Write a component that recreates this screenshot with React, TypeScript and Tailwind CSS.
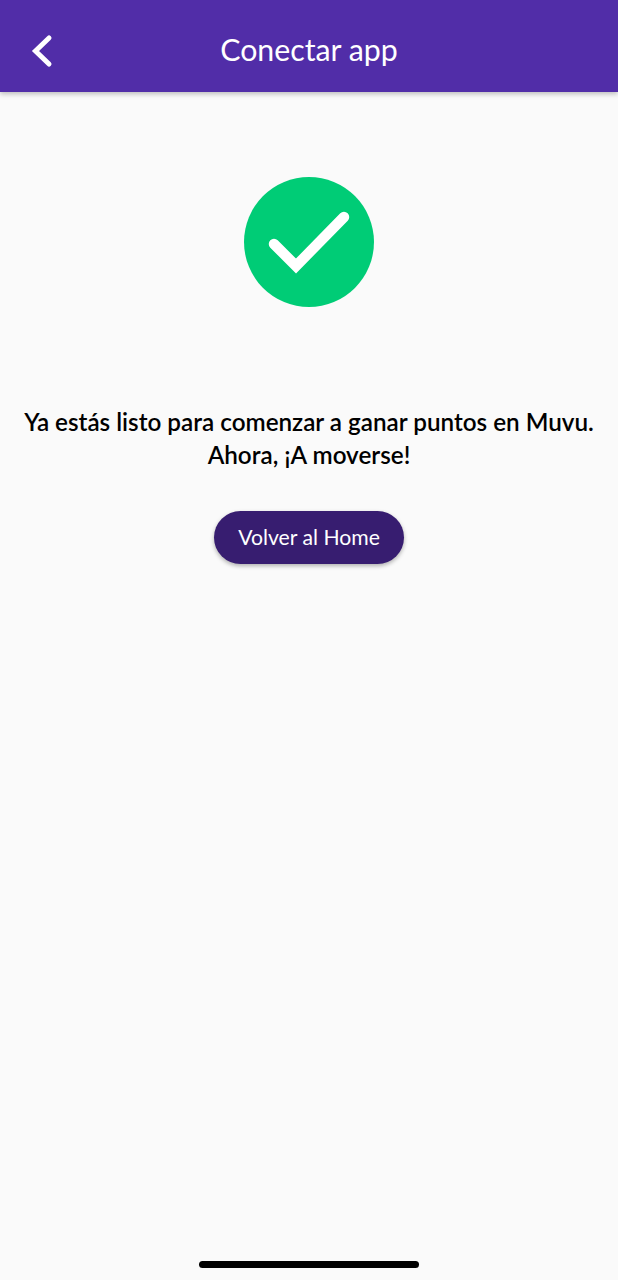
import React from "react";

const font = "font-['Lato','Noto_Sans',sans-serif]";

export default function App() {
  return (
    <div className={`${font} flex h-[1280px] w-[618px] flex-col bg-[#fafafa]`}>
      {/* Header */}
      <header className="relative z-10 flex h-[92px] items-center justify-center bg-[#512da8] pt-[5px] shadow-[0_2px_5px_rgba(0,0,0,0.25)]">
        <button className="absolute left-[26px] top-[30px] text-white">
          <svg width="32" height="42" viewBox="0 0 32 42" fill="none">
            <path
              d="M23 8 L9.5 21 L23 34"
              stroke="currentColor"
              strokeWidth="5"
              strokeLinecap="round"
              strokeLinejoin="miter"
            />
          </svg>
        </button>
        <h1 className="text-[30.3px] leading-[36px] text-white">Conectar app</h1>
      </header>

      {/* Content */}
      <main className="flex flex-1 flex-col items-center pt-[85px]">
        <div className="flex h-[130px] w-[130px] items-center justify-center rounded-full bg-[#00cc76]">
          <svg width="130" height="130" viewBox="0 0 130 130" fill="none">
            <path
              d="M30 67 L52 89 L100 40"
              stroke="#ffffff"
              strokeWidth="10.5"
              strokeLinecap="round"
              strokeLinejoin="miter"
            />
          </svg>
        </div>
        <p className="mt-[98px] whitespace-nowrap text-center text-[24.25px] font-semibold leading-[33px] text-black">
          Ya estás listo para comenzar a ganar puntos en Muvu.
          <br />
          Ahora, ¡A moverse!
        </p>
        <button className="mt-[40px] flex h-[53px] w-[190px] items-center justify-center rounded-full bg-[#371d70] text-[21.2px] text-white shadow-[0_2px_4px_rgba(0,0,0,0.3)]">
          Volver al Home
        </button>
      </main>

      {/* Home indicator */}
      <div className="flex justify-center pb-[12px]">
        <div className="h-[7px] w-[220px] rounded-full bg-black" />
      </div>
    </div>
  );
}
